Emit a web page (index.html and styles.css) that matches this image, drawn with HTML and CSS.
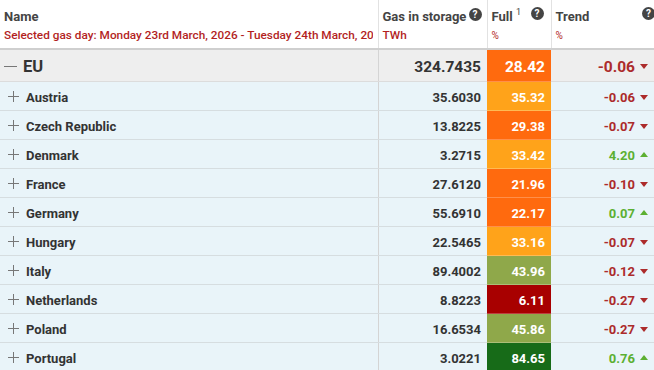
FILE: index.html
```html
<!DOCTYPE html>
<html>
<head>
<meta charset="utf-8">
<link rel="stylesheet" href="styles.css">
</head>
<body>
<div class="wrap">
<table class="agsi">
  <colgroup>
    <col class="c-name"><col class="c-gas"><col class="c-full"><col class="c-trend">
  </colgroup>
  <thead>
    <tr>
      <th class="h-name"><div class="ht">Name</div><div class="hs clip">Selected gas day: Monday 23rd March, 2026 - Tuesday 24th March, 2026</div></th>
      <th class="h-gas"><div class="ht">Gas in storage</div><div class="hs">TWh</div><span class="q">?</span></th>
      <th class="h-full"><div class="ht">Full <sup>1</sup></div><div class="hs pct">%</div><span class="q">?</span></th>
      <th class="h-trend"><div class="ht">Trend</div><div class="hs pct">%</div><span class="q">?</span></th>
    </tr>
  </thead>
  <tbody>
    <tr class="eu">
      <td class="name"><span class="tog minus"></span>EU</td>
      <td class="num">324.7435</td>
      <td class="full o1">28.42</td>
      <td class="trend down">-0.06<span class="tri"></span></td>
    </tr>
    <tr>
      <td class="name"><span class="tog plus"></span>Austria</td>
      <td class="num">35.6030</td>
      <td class="full o2">35.32</td>
      <td class="trend down">-0.06<span class="tri"></span></td>
    </tr>
    <tr>
      <td class="name"><span class="tog plus"></span>Czech Republic</td>
      <td class="num">13.8225</td>
      <td class="full o1">29.38</td>
      <td class="trend down">-0.07<span class="tri"></span></td>
    </tr>
    <tr>
      <td class="name"><span class="tog plus"></span>Denmark</td>
      <td class="num">3.2715</td>
      <td class="full o2">33.42</td>
      <td class="trend up">4.20<span class="tri"></span></td>
    </tr>
    <tr>
      <td class="name"><span class="tog plus"></span>France</td>
      <td class="num">27.6120</td>
      <td class="full o1">21.96</td>
      <td class="trend down">-0.10<span class="tri"></span></td>
    </tr>
    <tr>
      <td class="name"><span class="tog plus"></span>Germany</td>
      <td class="num">55.6910</td>
      <td class="full o1">22.17</td>
      <td class="trend up">0.07<span class="tri"></span></td>
    </tr>
    <tr>
      <td class="name"><span class="tog plus"></span>Hungary</td>
      <td class="num">22.5465</td>
      <td class="full o2">33.16</td>
      <td class="trend down">-0.07<span class="tri"></span></td>
    </tr>
    <tr>
      <td class="name"><span class="tog plus"></span>Italy</td>
      <td class="num">89.4002</td>
      <td class="full g1">43.96</td>
      <td class="trend down">-0.12<span class="tri"></span></td>
    </tr>
    <tr>
      <td class="name"><span class="tog plus"></span>Netherlands</td>
      <td class="num">8.8223</td>
      <td class="full r1">6.11</td>
      <td class="trend down">-0.27<span class="tri"></span></td>
    </tr>
    <tr>
      <td class="name"><span class="tog plus"></span>Poland</td>
      <td class="num">16.6534</td>
      <td class="full g1">45.86</td>
      <td class="trend down">-0.27<span class="tri"></span></td>
    </tr>
    <tr>
      <td class="name"><span class="tog plus"></span>Portugal</td>
      <td class="num">3.0221</td>
      <td class="full g2">84.65</td>
      <td class="trend up">0.76<span class="tri"></span></td>
    </tr>
  </tbody>
</table>
</div>
</body>
</html>
```
FILE: styles.css
```css
html, body {
  margin: 0;
  padding: 0;
  background: #fff;
  overflow: hidden;
}
.wrap {
  width: 654px;
  height: 370px;
  overflow: hidden;
}
.agsi {
  border-collapse: collapse;
  table-layout: fixed;
  width: 654px;
  font-family: Roboto, "Liberation Sans", sans-serif;
  color: #333;
}
.c-name { width: 378px; }
.c-gas { width: 109px; }
.c-full { width: 64px; }
.c-trend { width: 103px; }

thead th {
  height: 48px;
  padding: 0 0 0 4px;
  text-align: left;
  vertical-align: top;
  position: relative;
  border-bottom: 2px solid #cfcfcf;
  border-left: 1px solid #e2e2e2;
  font-weight: bold;
}
thead th.h-name { border-left: none; padding-right: 5px; }
.ht {
  font-size: 13px;
  color: #444;
  margin-top: 9px;
  line-height: 16px;
  white-space: nowrap;
}
.ht sup {
  font-size: 9px;
  vertical-align: top;
  line-height: 10px;
  position: relative;
  top: -2px;
  font-weight: normal;
}
.hs {
  font-size: 11.8px;
  color: #b31f1f;
  line-height: 17px;
  margin-top: 2px;
  white-space: nowrap;
  font-weight: 500;
}
.hs.pct { font-size: 10px; font-weight: normal; }
.clip { overflow: hidden; }
.q {
  position: absolute;
  top: 7px;
  right: 7px;
  width: 13px;
  height: 13px;
  border-radius: 50%;
  background: #444;
  color: #fff;
  font-size: 10px;
  line-height: 13px;
  text-align: center;
  font-weight: bold;
}
.h-gas .q { right: auto; left: 90px; top: 8px; }
.h-trend .q { right: -1px; }

tbody td {
  height: 26px;
  padding: 2px 0 0 0;
  border-bottom: 1px solid #d6dde0;
  background: #e9f4f9;
  font-weight: bold;
  font-size: 13px;
  white-space: nowrap;
}
tbody tr.eu td {
  height: 29px;
  background: #eeeeee;
  border-bottom: 1px solid #dcdcdc;
  font-size: 15.5px;
}
tbody tr.eu td.name { font-size: 16.5px; }
td.name {
  padding-left: 8px;
  color: #333;
}
tr.eu td.name { padding-left: 4px; }
.tog {
  display: inline-block;
  position: relative;
  vertical-align: middle;
  width: 11px;
  height: 11px;
  margin-right: 7px;
  margin-top: -3px;
}
.tog::before, .tog::after {
  content: "";
  position: absolute;
  background: #777;
}
.tog::before {
  left: 0; right: 0; top: 5px; height: 1px;
}
.plus::after {
  top: 0; bottom: 0; left: 5px; width: 1px;
}
.minus { width: 13px; margin-right: 6px; }
.minus::after { display: none; }
td.num {
  text-align: right;
  padding-right: 6px;
  border-left: 1px solid #d4d4d4;
  color: #333;
}
td.full {
  text-align: right;
  padding-right: 6px;
  color: #fff;
  border-bottom-color: rgba(255,255,255,0.25) !important;
}
td.o1 { background: #ff6a0e !important; }
td.o2 { background: #ffa31a !important; }
td.g1 { background: #8fa84a !important; }
td.g2 { background: #176b18 !important; }
td.r1 { background: #a80000 !important; }
td.trend {
  text-align: right;
  padding-right: 6px;
}
.down { color: #ac2b2b; }
.up { color: #5cb032; }
.tri {
  display: inline-block;
  width: 0;
  height: 0;
  margin-left: 5px;
  vertical-align: middle;
  border-left: 4.5px solid transparent;
  border-right: 4.5px solid transparent;
}
.down .tri { border-top: 5px solid #ac2b2b; margin-top: -2px; }
.up .tri { border-bottom: 5px solid #5cb032; margin-top: -4px; }
```
